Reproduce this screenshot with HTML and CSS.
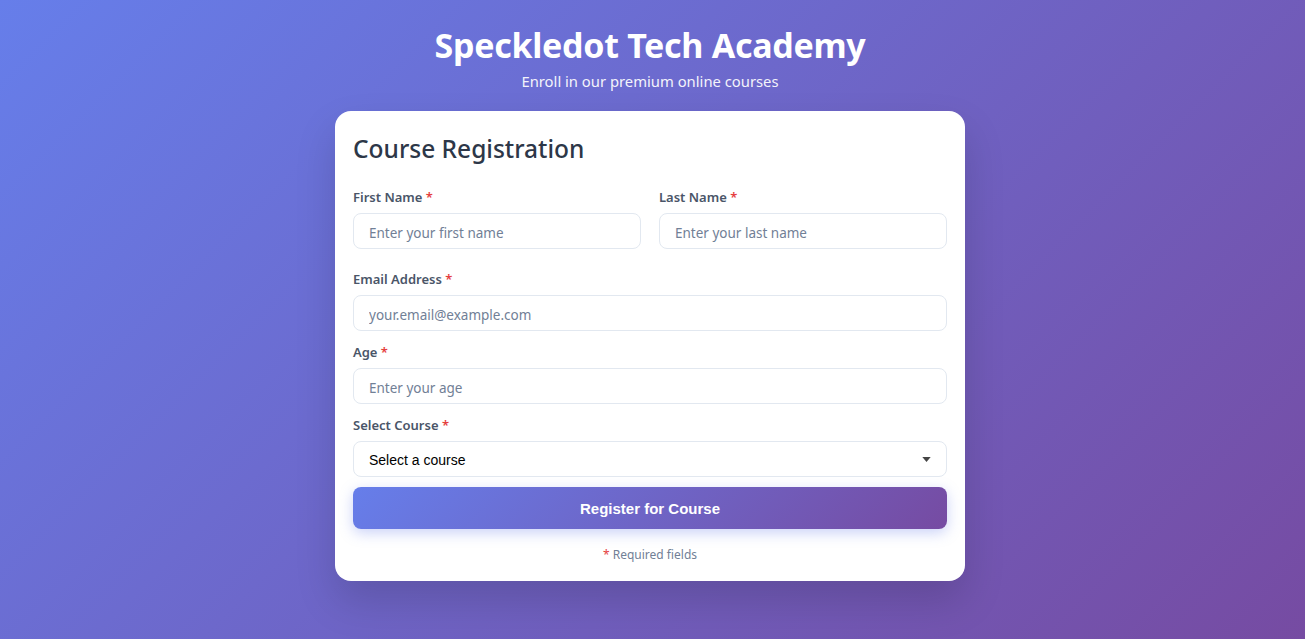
FILE: index.html
```html
<!DOCTYPE html>
<html lang="en">
<head>
<meta charset="utf-8">
<title>Speckledot Tech Academy</title>
<link rel="stylesheet" href="styles.css">
</head>
<body>
<div class="page">
  <header class="header">
    <h1 class="brand">Speckledot Tech Academy</h1>
    <p class="tagline">Enroll in our premium online courses</p>
  </header>
  <main class="card">
    <h2 class="card-title">Course Registration</h2>
    <form class="form">
      <div class="row">
        <div class="group">
          <label class="label">First Name <span class="req">*</span></label>
          <input class="input" type="text" placeholder="Enter your first name">
        </div>
        <div class="group">
          <label class="label">Last Name <span class="req">*</span></label>
          <input class="input" type="text" placeholder="Enter your last name">
        </div>
      </div>
      <div class="group">
        <label class="label">Email Address <span class="req">*</span></label>
        <input class="input" type="email" placeholder="your.email@example.com">
      </div>
      <div class="group">
        <label class="label">Age <span class="req">*</span></label>
        <input class="input" type="number" placeholder="Enter your age">
      </div>
      <div class="group">
        <label class="label">Select Course <span class="req">*</span></label>
        <div class="select-wrap">
          <select class="select">
            <option>Select a course</option>
          </select>
          <svg class="caret" width="9" height="5" viewBox="0 0 10 6"><path d="M0 0h10L5 6z" fill="#444"/></svg>
        </div>
      </div>
      <button type="button" class="btn">Register for Course</button>
      <p class="note"><span class="req">*</span> Required fields</p>
    </form>
  </main>
</div>
</body>
</html>
```
FILE: styles.css
```css
* { box-sizing: border-box; }
html, body { margin: 0; padding: 0; }
body {
  min-height: 639px;
  font-family: "Noto Sans", "Open Sans", sans-serif;
  background: linear-gradient(135deg, #667eea 0%, #764ba2 100%);
  color: #2d3748;
}
.page {
  display: flex;
  flex-direction: column;
  align-items: center;
  padding: 22px 5px 0 0;
}
.header { text-align: center; color: #fff; margin-bottom: 20px; }
.brand {
  margin: 0;
  font-size: 34px;
  font-weight: 700;
  line-height: 46px;
  letter-spacing: -0.3px;
}
.tagline {
  margin: 3px 0 0;
  font-size: 14.8px;
  line-height: 20px;
  opacity: 0.92;
}
.card {
  width: 630px;
  background: #fff;
  border-radius: 16px;
  padding: 20px 18px 18px;
  box-shadow: 0 20px 40px rgba(0, 0, 0, 0.15);
}
.card-title {
  margin: 0 0 21px;
  font-size: 24.5px;
  font-weight: 500;
  line-height: 36px;
  color: #2d3748;
}
.form { display: flex; flex-direction: column; }
.row {
  display: grid;
  grid-template-columns: 1fr 1fr;
  gap: 18px;
  margin-bottom: 7px;
}
.group { margin-bottom: 12px; display: flex; flex-direction: column; }
.row .group { margin-bottom: 14px; }
.label {
  font-size: 13px;
  font-weight: 600;
  color: #4a5568;
  line-height: 18px;
  margin-bottom: 7px;
}
.req { color: #e53e3e; }
.input, .select {
  width: 100%;
  height: 36px;
  border: 1px solid #e2e8f0;
  border-radius: 8px;
  padding: 0 15px;
  font-size: 13.5px;
  color: #2d3748;
  background: #fff;
  outline: none;
}
.input { font-family: "Noto Sans", "Open Sans", sans-serif; padding-top: 3px; }
.input::placeholder { color: #718096; }
.select-wrap { position: relative; }
.select {
  appearance: none;
  -webkit-appearance: none;
  font-family: "Liberation Sans", Arial, sans-serif;
  font-size: 14px;
  color: #000;
  padding-top: 1px;
}
.caret { position: absolute; right: 16px; top: 16px; pointer-events: none; }
.btn {
  height: 42px;
  border: none;
  border-radius: 8px;
  background: linear-gradient(135deg, #667eea 0%, #764ba2 100%);
  color: #fff;
  font-family: "Liberation Sans", Arial, sans-serif;
  font-size: 15px;
  font-weight: 700;
  box-shadow: 0 4px 14px rgba(102, 126, 234, 0.35);
  margin-top: -2px;
}
.note {
  margin: 18px 0 0;
  text-align: center;
  font-size: 12px;
  color: #718096;
  line-height: 16px;
}
```
